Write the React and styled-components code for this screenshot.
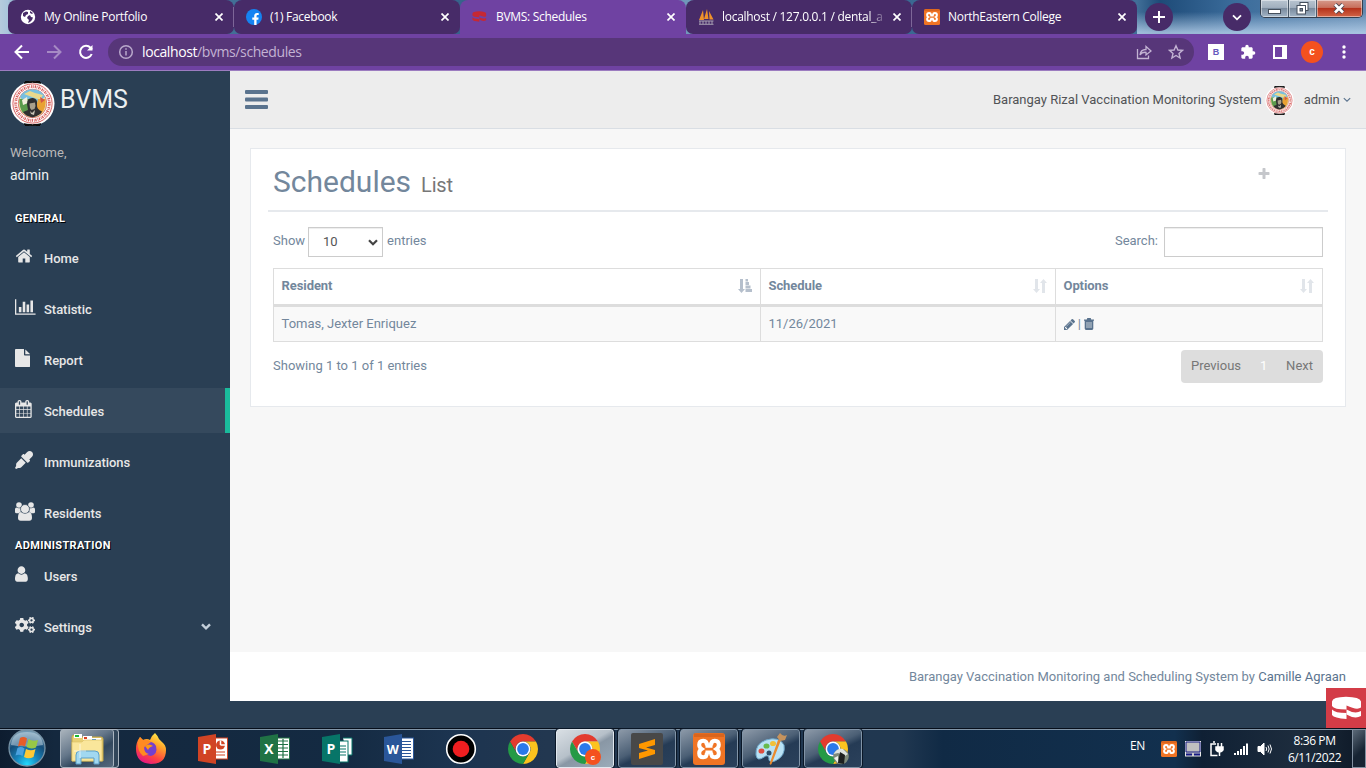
import React from "react";
import styled, { createGlobalStyle, css } from "styled-components";
import { FaEyeDropper, FaCogs, FaFacebookF } from "react-icons/fa";
import { MdExtension } from "react-icons/md";

const GlobalStyle = createGlobalStyle`
  * { box-sizing: border-box; }
  body {
    margin: 0;
    overflow: hidden;
    font-family: Roboto, "Liberation Sans", sans-serif;
    font-size: 13px;
    line-height: 1.471;
    color: #73879c;
  }
  svg { display: block; flex: none; }
`;

const uiFont = css`
  font-family: "Open Sans", "Noto Sans", sans-serif;
`;

const Screen = styled.div`
  width: 1366px;
  height: 768px;
  display: grid;
  grid-template-rows: 34px 37px 657px 40px;
  overflow: hidden;
`;

/* ---------- browser ---------- */

const TabStrip = styled.div`
  display: flex;
  padding-left: 8px;
  background:
    linear-gradient(180deg, transparent 35%, rgba(190, 215, 240, 0.75) 95%) 1137px 0 / 229px 34px no-repeat,
    linear-gradient(90deg, #b5cbdd 0, #a9c5dc 8px, #4b7ba0 30px, #356089 500px, #7199bb 690px, #3a6892 900px, #416f98 1137px, #1e4b78 1160px, #3b6c9b 1235px, #6289b0 1366px);
`;

const Tab = styled.div`
  ${uiFont}
  width: ${(p) => p.$width}px;
  height: 34px;
  display: flex;
  align-items: center;
  padding: 0 11px 0 12px;
  border-radius: 8px 8px ${(p) => (p.$active ? "0 0" : "7px 7px")};
  background: ${(p) => (p.$active ? "#6f42a2" : "#472b68")};
  color: #fff;
  font-size: 12px;
`;

const TabDivider = styled.span`
  width: 1px;
  height: 20px;
  margin: 0 -11px 0 10px;
  background: #7d6698;
`;

const Favicon = styled.span`
  width: 16px;
  height: 16px;
  flex: none;
  margin-right: 8px;
`;

const TabTitle = styled.span`
  flex: 1;
  overflow: hidden;
  white-space: nowrap;
  line-height: 18px;
  letter-spacing: ${(p) => p.$spacing || 0}px;
  ${(p) => p.$fade && "mask-image: linear-gradient(90deg, #000 88%, transparent 100%);"}
`;

const CloseIcon = styled.svg`
  margin-left: 5px;
`;

const CircleButton = styled.div`
  width: 28px;
  height: 28px;
  margin: 3px 0 0 ${(p) => p.$gap}px;
  border-radius: 50%;
  background: #472b68;
  display: grid;
  place-items: center;
`;

const WindowControls = styled.div`
  display: flex;
  height: 18px;
  margin-left: 9px;
  width: 103px;
  border: 1px solid #343f4e;
  border-top: 0;
  border-radius: 0 0 5px 5px;
  overflow: hidden;
`;

const WindowButton = styled.div`
  flex: ${(p) => (p.$danger ? 47 : 28)} 0 0;
  display: grid;
  place-items: center;
  border-right: ${(p) => (p.$danger ? 0 : 1)}px solid #485868;
  box-shadow: inset 0 0 0 1px rgba(255, 255, 255, 0.45);
  background: ${(p) =>
    p.$danger
      ? "linear-gradient(#d69a8b 0, #c8705c 44%, #b32f18 46%, #d26547 100%)"
      : "linear-gradient(#b8c4d0 0, #a2b0bf 44%, #76879a 46%, #a3b5c7 100%)"};
`;

const Toolbar = styled.div`
  display: flex;
  align-items: center;
  padding: 0 0 1px;
  background: #6f42a2;
  border-bottom: 1px solid #9c7cc0;
`;

const NavIcons = styled.div`
  display: flex;
  gap: 16px;
  padding-left: 14px;
  width: 108px;
`;

const AddressBar = styled.div`
  ${uiFont}
  width: 1086px;
  height: 28px;
  border-radius: 14px;
  background: #573679;
  display: flex;
  align-items: center;
  padding: 0 10px;
  color: #c3b3d3;
  font-size: 14px;
  letter-spacing: -0.4px;
`;

const AddressText = styled.div`
  flex: 1;
  margin-left: 8px;
  padding-top: 1px;
  b { font-weight: 400; color: #fff; }
`;

const AddressIcons = styled.div`
  display: flex;
  gap: 16px;
`;

const Extensions = styled.div`
  display: flex;
  align-items: center;
  padding-left: 14px;
`;

const ExtensionBadge = styled.div`
  width: 16px;
  height: 16px;
  background: #fff;
  color: #6659bd;
  font: 700 9px/16px "Liberation Sans", sans-serif;
  text-align: center;
  margin-right: 16px;
`;

const SidePanelIcon = styled.div`
  width: 14px;
  height: 14px;
  margin: 0 14px 0 17px;
  border: 2px solid #fff;
  border-right-width: 5px;
`;

const ProfileBadge = styled.div`
  width: 22px;
  height: 22px;
  border-radius: 50%;
  background: #f4511e;
  color: #fff;
  font: 700 10px/22px "Liberation Sans", sans-serif;
  text-align: center;
`;

const MenuDots = styled.svg`
  margin-left: 19px;
`;

/* ---------- page ---------- */

const Page = styled.div`
  position: relative;
  display: flex;
  background: #2a3f54;
`;

const Sidebar = styled.aside`
  width: 230px;
  color: #e7e7e7;
  font-weight: 500;
`;

const Brand = styled.div`
  display: flex;
  align-items: center;
  gap: 6px;
  height: 58px;
  padding: 6px 0 0 10px;
  font-size: 25px;
  font-weight: 400;
  color: #ecf0f1;
  span { margin: -6px 0 0 -1px; }
`;

const Welcome = styled.div`
  padding: 14px 10px 0;
  height: 76px;
  font-weight: 400;
  color: #bab8b8;
  strong {
    display: block;
    margin-top: 3px;
    font-size: 14px;
    line-height: 21px;
    font-weight: 400;
    color: #ecf0f1;
  }
`;

const SectionTitle = styled.h3`
  height: ${(p) => p.$height}px;
  margin: 0;
  padding: ${(p) => p.$top}px 0 0 15px;
  font-size: 11px;
  line-height: ${(p) => p.$line || 16}px;
  font-weight: 700;
  letter-spacing: 0.33px;
  color: #fff;
  text-shadow: 1px 1px #000;
  text-transform: uppercase;
`;

const NavItem = styled.a`
  display: flex;
  align-items: center;
  height: 45px;
  margin-bottom: 6px;
  padding: 0 ${(p) => (p.$active ? 14 : 19)}px 0 15px;
  background: ${(p) => (p.$active ? "#35495d" : "transparent")};
  border-right: ${(p) => (p.$active ? "5px solid #1abb9c" : "0")};
`;

const NavGlyph = styled.span`
  width: 29px;
  margin-top: -3px;
  color: #e7e7e7;
`;

const NavLabel = styled.span`
  flex: 1;
  line-height: 18px;
  padding-top: 3px;
  letter-spacing: -0.03px;
`;

const Main = styled.main`
  width: 1136px;
  height: 630px;
  display: grid;
  grid-template-rows: 58px 523px 49px;
`;

const TopBar = styled.header`
  display: flex;
  align-items: center;
  justify-content: space-between;
  padding: 0 15px 0 15px;
  background: #ededed;
  border-bottom: 1px solid #d9dee4;
`;

const Account = styled.div`
  display: flex;
  align-items: center;
  padding-top: 1px;
  color: #515356;
  svg:first-of-type { margin: 0 10px 0 3px; }
`;

const Content = styled.div`
  background: #f7f7f7;
  padding: 19px 20px;
`;

const Panel = styled.section`
  height: 259px;
  padding: 0 17px;
  background: #fff;
  border: 1px solid #e6e9ed;
`;

const PanelHeader = styled.div`
  display: flex;
  justify-content: space-between;
  height: 63px;
  padding: 13px 57px 0 5px;
  border-bottom: 2px solid #e6e9ed;
`;

const Title = styled.h1`
  margin: 0;
  font-size: 30px;
  line-height: 40px;
  font-weight: 400;
  small {
    margin-left: 10px;
    font-size: 20px;
    letter-spacing: -0.2px;
    color: #777;
  }
`;

const AddIcon = styled.svg`
  margin-top: 5px;
`;

const PanelBody = styled.div`
  padding: 15px 5px 0;
`;

const Controls = styled.div`
  display: flex;
  justify-content: space-between;
  height: 41px;
`;

const Control = styled.label`
  display: flex;
  line-height: 28px;
`;

const Select = styled.div`
  width: 75px;
  height: 30px;
  margin: 0 4px 0 3px;
  padding: 0 4px 0 14px;
  display: flex;
  align-items: center;
  justify-content: space-between;
  border: 1px solid #ccc;
  box-shadow: inset 0 1px 1px rgba(0, 0, 0, 0.075);
  color: #555;
`;

const SearchInput = styled.input`
  width: 159px;
  height: 30px;
  margin: 0 0 0 6px;
  border: 1px solid #ccc;
  box-shadow: inset 0 1px 1px rgba(0, 0, 0, 0.075);
`;

const Table = styled.div`
  display: grid;
  grid-template-columns: 487px 295px 267px;
  border: 1px solid #ddd;
  border-right: 0;
`;

const Cell = styled.div`
  display: flex;
  align-items: center;
  justify-content: ${(p) => (p.$head ? "space-between" : "flex-start")};
  height: ${(p) => (p.$head ? 38 : 34)}px;
  padding: 0 8px ${(p) => (p.$head ? 2 : 0)}px 7.500px;
  border-right: 1px solid #ddd;
  border-bottom: ${(p) => (p.$head ? "3px solid #ddd" : "0")};
  background: ${(p) => (p.$head ? "#fff" : "#f9f9f9")};
  font-weight: ${(p) => (p.$head ? 700 : 400)};
  letter-spacing: ${(p) => (p.$head ? -0.08 : 0)}px;
`;

const TableFooter = styled.div`
  display: flex;
  justify-content: space-between;
  padding-top: 8px;
  line-height: 32px;
`;

const Pagination = styled.div`
  display: flex;
  justify-content: space-between;
  width: 142px;
  height: 33px;
  padding: 0 10px;
  border-radius: 4px;
  background: #ddd;
  color: #777;
  span { color: #fff; }
`;

const Footer = styled.footer`
  background: #fff;
  padding: 15px 20px;
  text-align: right;
  a { color: #5a738e; }
`;

const CakeBadge = styled.div`
  position: absolute;
  right: 0;
  bottom: 0;
  width: 40px;
  height: 40px;
  background: #d33c47;
`;

/* ---------- taskbar ---------- */

const Taskbar = styled.div`
  display: flex;
  border-top: 1px solid #070f1b;
  box-shadow: inset 0 1px 0 #8396a8;
  background: linear-gradient(90deg, #0d1c2f 0, #14283e 4%, #142a42 25%, #1c3450 33%, #223750 40%, #203750 66%, #102a45 69%, #12304e 86%, #0f2034 88%, #1d2c3d 95%, #0d1826 100%);
  color: #fff;
`;

const StartButton = styled.div`
  width: 60px;
  padding-left: 8px;
`;

const TaskItem = styled.div`
  width: ${(p) => (p.$state ? 58 : 62)}px;
  height: 39px;
  margin-left: ${(p) => (p.$state === "active" ? 2 : 0)}px;
  margin-right: ${(p) => (p.$state ? 4 : 0)}px;
  display: grid;
  place-items: center;
  ${(p) =>
    p.$state &&
    css`
      border: 1px solid ${p.$state === "active" ? "#e1e8ef" : "#8194a7"};
      border-radius: 3px;
      outline: 1px solid #0a1727;
      outline-offset: 0;
      background: ${p.$state === "active"
        ? "linear-gradient(150deg, #d9dfe4 0%, #b6c0c9 45%, #8997a5 55%, #9babb9 100%)"
        : "linear-gradient(155deg, #8c99a8 0%, #4b5f75 45%, #253b55 58%, #2b415b 100%)"};
    `}
`;

const ExplorerItem = styled.div`
  width: 59px;
  height: 39px;
  margin-right: 1px;
  padding-left: 9px;
  display: flex;
  align-items: center;
  border: 1px solid #a8b3be;
  border-radius: 3px;
  box-shadow: inset -4px 0 0 #31465a, inset -5px 0 0 #aab5c0;
  background: linear-gradient(150deg, #a9b3bc 0%, #65778a 40%, #32485e 60%, #5a6d80 100%);
`;

const Tray = styled.div`
  ${uiFont}
  margin-left: auto;
  display: flex;
  font-size: 12px;
`;

const Language = styled.span`
  width: 31px;
  line-height: 33px;
  letter-spacing: -0.3px;
`;

const TrayIcons = styled.div`
  display: flex;
  gap: 8px;
  padding-top: 12px;
`;

const Clock = styled.div`
  width: 75px;
  padding-top: 3px;
  margin-left: 4px;
  text-align: center;
  line-height: 17px;
  letter-spacing: -0.4px;
`;

const ShowDesktop = styled.div`
  width: 14px;
  border: 1px solid #8290a0;
  background: linear-gradient(135deg, #5b6978, #172433 60%);
`;

/* ---------- drawings ---------- */

const Awesome = ({ d, size = 18, width = 1792, color = "currentColor" }) => (
  <svg height={size} width={(size * width) / 1792} viewBox={`0 0 ${width} 1792`} fill={color}>
    <path d={d} />
  </svg>
);

const paths = {
  home: "M1472 992v480q0 26-19 45t-45 19h-384v-384h-256v384h-384q-26 0-45-19t-19-45v-480q0-1 .5-3t.5-3l575-474 575 474q1 2 1 6zm223-69l-62 74q-8 9-21 11h-3q-13 0-21-7l-692-577-692 577q-12 8-24 7-13-2-21-11l-62-74q-8-10-7-23.5t11-21.5l719-599q32-26 76-26t76 26l244 204v-195q0-14 9-23t23-9h192q14 0 23 9t9 23v408l219 182q10 8 11 21.5t-7 23.5z",
  chart: "M640 896v512h-256v-512h256zm384-512v1024h-256v-1024h256zm1024 1152v128h-2048v-1536h128v1408h1920zm-640-896v768h-256v-768h256zm384-384v1152h-256v-1152h256z",
  file: "M1024 512v-472q22 14 36 28l408 408q14 14 28 36h-472zm-128 32q0 40 28 68t68 28h544v1056q0 40-28 68t-68 28h-1344q-40 0-68-28t-28-68v-1600q0-40 28-68t68-28h800v544z",
  calendar: "M128 1664h288v-288h-288v288zm352 0h320v-288h-320v288zm-352-352h288v-320h-288v320zm352 0h320v-320h-320v320zm-352-384h288v-288h-288v288zm736 736h320v-288h-320v288zm-384-736h320v-288h-320v288zm768 736h288v-288h-288v288zm-384-352h320v-320h-320v320zm-352-864v-288q0-13-9.5-22.5t-22.5-9.5h-64q-13 0-22.5 9.5t-9.5 22.5v288q0 13 9.5 22.5t22.5 9.5h64q13 0 22.5-9.5t9.5-22.5zm736 864h288v-320h-288v320zm-384-384h320v-288h-320v288zm384 0h288v-288h-288v288zm32-480v-288q0-13-9.5-22.5t-22.5-9.5h-64q-13 0-22.5 9.5t-9.5 22.5v288q0 13 9.5 22.5t22.5 9.5h64q13 0 22.5-9.5t9.5-22.5zm384-64v1280q0 52-38 90t-90 38h-1408q-52 0-90-38t-38-90v-1280q0-52 38-90t90-38h128v-96q0-66 47-113t113-47h64q66 0 113 47t47 113v96h384v-96q0-66 47-113t113-47h64q66 0 113 47t47 113v96h128q52 0 90 38t38 90z",
  user: "M1280 1399q0 109-62.5 187t-150.5 78h-854q-88 0-150.5-78t-62.5-187q0-85 8.5-160.5t31.5-152 58.5-131 94-89 134.5-34.5q131 128 313 128t313-128q76 0 134.5 34.5t94 89 58.5 131 31.5 152 8.5 160.5zm-256-887q0 159-112.5 271.5t-271.5 112.5-271.5-112.5-112.5-271.5 112.5-271.5 271.5-112.5 271.5 112.5 112.5 271.5z",
  plus: "M1600 736v192q0 40-28 68t-68 28h-416v416q0 40-28 68t-68 28h-192q-40 0-68-28t-28-68v-416h-416q-40 0-68-28t-28-68v-192q0-40 28-68t68-28h416v-416q0-40 28-68t68-28h192q40 0 68 28t28 68v416h416q40 0 68 28t28 68z",
  pencil: "M363 1536l91-91-235-235-91 91v107h128v128h107zm523-928q0-22-22-22-10 0-17 7l-542 542q-7 7-7 17 0 22 22 22 10 0 17-7l542-542q7-7 7-17zm-54-192l416 416-832 832h-416v-416zm683 96q0 53-37 90l-166 166-416-416 166-165q36-38 90-38 53 0 91 38l235 234q37 39 37 91z",
};

const GroupIcon = () => (
  <svg width="20" height="19" viewBox="0 0 20 19" fill="#e7e7e7">
    <circle cx="4" cy="3" r="2.8" />
    <circle cx="16" cy="3" r="2.8" />
    <path d="M0 10V7.600Q0 5.500 1.500 5.500Q3.500 7 6 5.700L7 9Q5 9.200 4 11.200H1.600Q0 11.200 0 10Z" />
    <path d="M20 10V7.600Q20 5.500 18.500 5.500Q16.500 7 14 5.700L13 9Q15 9.200 16 11.200H18.400Q20 11.200 20 10Z" />
    <circle cx="10" cy="7" r="4.500" stroke="#2a3f54" strokeWidth="0.700" />
    <path d="M5.800 10Q10 13.300 14.200 10Q17 10.500 17 15.700Q17 18.700 14.300 18.700H5.700Q3 18.700 3 15.700Q3 10.500 5.800 10Z" />
  </svg>
);

const ChevronDown = ({ width, stroke, weight = 2 }) => (
  <svg width={width} height={width * 0.7} viewBox="0 0 10 7" fill="none" stroke={stroke} strokeWidth={weight}>
    <path d="M1 1.300L5 5.300L9 1.300" />
  </svg>
);

const Seal = ({ size }) => (
  <svg width={size} height={size} viewBox="0 0 45 45">
    <path d="M15 0H30V4H15ZM15 41H30V45H15Z" fill="#0b0b0b" />
    <circle cx="22.500" cy="22.500" r="22" fill="#fff" />
    <path d="M14 2Q22.500 -1 31 2Q22.500 0.500 14 2ZM14 43Q22.500 46 31 43Q22.500 44.500 14 43Z" fill="#0b0b0b" stroke="#0b0b0b" />
    <circle cx="22.500" cy="22.500" r="19.600" fill="none" stroke="#d2504f" strokeWidth="0.900" />
    <circle cx="22.500" cy="22.500" r="16.900" fill="none" stroke="#d65c5a" strokeWidth="2.800" strokeDasharray="1.300 0.700 0.700 1" />
    <circle cx="22.500" cy="22.500" r="14.300" fill="#e9dfa5" stroke="#d2504f" strokeWidth="0.700" />
    <path d="M10 16A14 14 0 0 1 35 16L28 21H14Z" fill="#77bfe0" />
    <path d="M14 13L20 10L25 12L33 14L30 19L22 16Z" fill="#e9d98c" />
    <path d="M9.500 18H20V29L13 32Q9 27 9.500 18Z" fill="#5b9b4c" />
    <path d="M28 18H35.500Q36.500 27 31 33L26 28Z" fill="#e9a133" />
    <path d="M12 19L17 16L18 22L13 24Z" fill="#f2eedc" />
    <path d="M30 16L35 19L31 22Z" fill="#d45743" />
    <path d="M17 23Q17 16.500 23 17Q28 17.500 27 24Q26.500 28 32 30.500Q31 34 22.500 36.500Q15 35 13 31L18 29Z" fill="#303030" />
    <path d="M19.500 22.500L25 21.500L25.500 25L24.500 28L21.500 29L20 27Z" fill="#a9a08c" />
    <path d="M20 30L22 32L25 29L24 34L21 33Z" fill="#c9c5b7" />
  </svg>
);

const CakeMark = ({ color = "#fff", width = 40, height = 40, box = "0 0 40 40" }) => (
  <svg width={width} height={height} viewBox={box} fill={color}>
    <path d="M6 13.500Q6.500 9 20 8.700Q34 9 35 13.500V19.500Q31 22.500 20.500 17.500V21.500Q8 21.500 6 18Z" />
    <path d="M6 21.500Q9 25 20.500 25V31Q8 30 6 27Z" />
    <path d="M20.500 21.500Q29 26.500 35 23V28Q29 31.500 20.500 26.500Z" />
  </svg>
);

const XamppMark = ({ size }) => (
  <svg width={size} height={size} viewBox="0 0 32 32">
    <rect width="32" height="32" rx="3" fill="#f07424" />
    <path d="M1 0.500H31V4H1Z" fill="#c45516" opacity="0.500" />
    <g fill="none" stroke="#fff" strokeWidth="4">
      <path d="M14 12.500Q14 7.800 10.200 7.800Q6.200 7.800 6.200 11.800Q6.200 14.500 8.500 16Q6.200 17.500 6.200 20.200Q6.200 24.200 10.200 24.200Q14 24.200 14 19.500" />
      <path d="M18 12.500Q18 7.800 21.800 7.800Q25.800 7.800 25.800 11.800Q25.800 14.500 23.500 16Q25.800 17.500 25.800 20.200Q25.800 24.200 21.800 24.200Q18 24.200 18 19.500" />
      <path d="M12.500 13.200H19.500M12.500 19.200H19.500" strokeWidth="3.200" />
    </g>
  </svg>
);

const ChromeIcon = ({ badge }) => (
  <svg width="32" height="32" viewBox="-1 -1 32 32">
    <path d="M2.010 7.500A15 15 0 0 1 27.990 7.500H15A7.500 7.500 0 0 0 8.500 18.750Z" fill="#e33b2e" />
    <path d="M27.990 7.500A15 15 0 0 1 15 30L21.500 18.750A7.500 7.500 0 0 0 15 7.500Z" fill="#fcc31e" />
    <path d="M15 30A15 15 0 0 1 2.010 7.500L8.500 18.750A7.500 7.500 0 0 0 21.500 18.750Z" fill="#249a46" />
    <circle cx="15" cy="15" r="7.400" fill="#fff" />
    <circle cx="15" cy="15" r="5.900" fill="#2a79ea" />
    {badge === "letter" && (
      <g>
        <circle cx="23" cy="23" r="8" fill="#f4511e" />
        <text x="23" y="26" textAnchor="middle" fontFamily="Liberation Sans, sans-serif" fontSize="8" fontWeight="700" fill="#fff">c</text>
      </g>
    )}
    {badge === "photo" && (
      <g>
        <circle cx="23" cy="22.500" r="7.800" fill="#7e8a7b" />
        <path d="M15.500 20Q19 14 25 15L30 20L27 22L20 19Z" fill="#dde3df" />
        <path d="M22 18L27 21L26 30L20 29Z" fill="#1d2020" />
        <path d="M16 24L20 22V29Z" fill="#f0f1ec" />
      </g>
    )}
  </svg>
);

const FirefoxIcon = () => (
  <svg width="32" height="32" viewBox="0 0 32 32">
    <defs>
      <linearGradient id="flame" x1="0.800" y1="0" x2="0.300" y2="1">
        <stop offset="0" stopColor="#fff44f" />
        <stop offset="0.350" stopColor="#ffa42a" />
        <stop offset="0.700" stopColor="#ff453f" />
        <stop offset="1" stopColor="#e31587" />
      </linearGradient>
    </defs>
    <path d="M20 0Q23 3 24 6L27 9Q31 12 31 17Q31 31 16 31Q1 30 1 16Q1 9 5 4L8 7Q12 5 15 7Q16 3 20 0Z" fill="url(#flame)" />
    <path d="M12 9Q18 8 21 13Q23 21 16 23Q9 22 9 16Q9 13 12 9Z" fill="#7440cf" />
    <path d="M5 4L8 7Q13 6 16 9L12 12L9 14Q9 20 14 21L8 23Q2 18 3 9Z" fill="#ff8a22" />
    <path d="M10 13Q14 10 18 13Q14 14 13 17Z" fill="#ff980e" />
  </svg>
);

const OfficeIcon = ({ color, letter, kind }) => (
  <svg width="32" height="32" viewBox="0 0 32 32">
    {kind === "publisher" && <path d="M22 5H31V22H26" fill="#fff" stroke={color} strokeWidth="1" />}
    <rect x="15" y={kind === "publisher" ? 8 : 5} width={kind === "publisher" ? 12 : 15.500} height="21" fill="#fff" stroke={color} strokeWidth="1" />
    {kind === "slides" && (
      <g>
        <circle cx="23.500" cy="12" r="4.500" fill={color} />
        <path d="M23.500 12V7.500M23.500 12H28" stroke="#fff" strokeWidth="1.500" />
        <path d="M19 19H28M19 22H28" stroke={color} strokeWidth="1.200" />
      </g>
    )}
    {kind === "grid" && <path d="M19 8H29M19 11.500H29M19 15H29M19 18.500H29M19 22H29M24 6V25" stroke={color} strokeWidth="1.200" />}
    {kind === "lines" && <path d="M19 8.500H28M19 11.500H28M19 14.500H28M19 17.500H28M19 20.500H28M19 23.500H28" stroke={color} strokeWidth="1.100" />}
    {kind === "publisher" && <path d="M19 13H25M19 16H25M19 19H25M19 22H25" stroke={color} strokeWidth="1.200" />}
    <path d="M1 4L19 1V31L1 28Z" fill={color} />
    <text x="9.800" y="21" textAnchor="middle" fontFamily="Open Sans, sans-serif" fontSize={letter === "W" ? 12.5 : 14} fontWeight="700" fill="#fff">{letter}</text>
  </svg>
);

const FolderIcon = () => (
  <svg width="34" height="32" viewBox="0 0 34 32">
    <path d="M2 4Q2 2 4 2H9L11 4H31Q33 4 33 6V28H2Z" fill="#e8cf73" stroke="#c2a749" />
    <path d="M4 1H12V5H4ZM13 3H22V7H13ZM21 5H31V9H21Z" fill="#fff" />
    <path d="M5 2H9V4H5Z" fill="#19b834" /><path d="M14 4H17V6H14Z" fill="#db4424" /><path d="M22 6H26V8H22Z" fill="#2c8ae0" />
    <path d="M2 9H12L14 7H32V28H2Z" fill="#fae69b" stroke="#dcc269" strokeWidth="0.700" />
    <path d="M6 31V22Q6 18 10 18H25Q29 18 29 22V31H24V25H11V31Z" fill="#a1d8f1" stroke="#5b9fc8" />
    <path d="M10 11V25M4 18H16" stroke="#fff" strokeWidth="0.900" opacity="0.700" />
  </svg>
);

const WindowsOrb = () => (
  <svg width="38" height="38" viewBox="0 0 38 38">
    <defs>
      <radialGradient id="orb" cx="0.500" cy="0.950" r="0.900">
        <stop offset="0" stopColor="#23dafd" />
        <stop offset="0.350" stopColor="#1685bd" />
        <stop offset="0.700" stopColor="#164d78" />
        <stop offset="1" stopColor="#6f98b3" />
      </radialGradient>
    </defs>
    <circle cx="19" cy="19" r="18" fill="url(#orb)" stroke="#7793a6" strokeWidth="1.300" />
    <path d="M3 16Q4 3 19 3Q34 3 35 16Q19 19 3 16Z" fill="#e3eef5" opacity="0.450" />
    <path d="M12 9Q15.500 7 19 9.500L17 17.500Q13.500 15.500 10 17.500Z" fill="#e65d28" />
    <path d="M20.500 10Q25 13 30 11L28 18.500Q23 20.500 18.500 18Z" fill="#98c846" />
    <path d="M9.500 19Q13 17 16.500 19.500L14.500 27Q11 25 7.500 26.500Z" fill="#4ba1df" />
    <path d="M18 20Q23 22.500 27.500 20L25.500 28Q20.500 30.500 16 28Z" fill="#fdc936" />
  </svg>
);

const PaintIcon = () => (
  <svg width="34" height="34" viewBox="0 0 34 34">
    <path d="M2 23Q1 12 12 8Q25 4 30 13Q32 24 21 29Q14 31 15 26Q14 22 10 25Q3 30 2 23Z" fill="#b9e2f5" stroke="#6fa9cc" />
    <ellipse cx="7.500" cy="19" rx="3" ry="2.600" fill="#df4f40" />
    <ellipse cx="12.500" cy="14" rx="3" ry="2.600" fill="#67bb4d" />
    <ellipse cx="19" cy="11.500" rx="3" ry="2.600" fill="#f1c038" />
    <circle cx="15" cy="21" r="2.500" fill="#2e4e69" />
    <path d="M27 8L18 31Q17 34 15.500 32L24 8Z" fill="#e98b2e" />
    <path d="M23 5L26 9L31 8L33 3Q29 5 26 1Z" fill="#c6935d" />
  </svg>
);

const SublimeIcon = () => (
  <svg width="32" height="32" viewBox="0 0 32 32">
    <rect width="32" height="32" rx="2" fill="#484848" />
    <path d="M8 11L24 6V12L15 14.500L24 17V21L8 26V20L17 17.500L8 15Z" fill="#ff9800" />
  </svg>
);

const RecordIcon = () => (
  <svg width="32" height="32" viewBox="0 0 32 32">
    <circle cx="16" cy="16" r="14.300" fill="#000" stroke="#fff" strokeWidth="1.600" />
    <circle cx="16" cy="16" r="8.300" fill="#ef1e20" />
  </svg>
);

const SortIcon = ({ amount }) => (
  <svg width="14" height="14" viewBox="0 0 14 14" fill={amount ? "#b5bfcc" : "#e1e5ea"}>
    <path d="M2 0H5V10H7L3.500 14L0 10H2Z" />
    {amount ? (
      <path d="M7.500 0H10V2.500H7.500ZM7.500 3H11V6H7.500ZM7.500 6.500H12.500V9.500H7.500ZM7.500 10H14V13H7.500Z" />
    ) : (
      <path d="M9 14V4H7L10.500 0L14 4H12V14Z" />
    )}
  </svg>
);

const TrashIcon = () => (
  <svg width="10" height="12" viewBox="0 0 10 12" fill="#5a738e">
    <path d="M3.300 0H6.700L7.200 1.500H10V2.700H9.300V10.600Q9.300 12 8 12H2Q0.700 12 0.700 10.600V2.700H0V1.500H2.800Z" />
    <path d="M3 4V10M5 4V10M7 4V10" stroke="#f9f9f9" strokeWidth="0.700" />
  </svg>
);

const favicons = {
  globe: (
    <svg width="16" height="16" viewBox="0 0 16 16">
      <circle cx="8" cy="8" r="7.200" fill="#fff" />
      <path d="M3 4L6 2.500L8 3V5L6 6L5 8L3 7ZM8 7L10 6L11 8L13 8.500L12 11L10 13L8 14L9 11L7 9ZM10 2L13 4L12 5L10 4Z" fill="#472b68" />
    </svg>
  ),
  facebook: (
    <svg width="16" height="16" viewBox="0 0 16 16">
      <circle cx="8" cy="8" r="8" fill="#1583f2" />
      <FaFacebookF x="3.500" y="4" width="9.500" height="12" size={null} color="#fff" />
    </svg>
  ),
  cake: <CakeMark color="#c62833" width={16} height={16} box="5 4 34 34" />,
  sails: (
    <svg width="16" height="16" viewBox="0 0 16 16">
      <path d="M5 1L6 11L1 11ZM9 0L10.500 10H6ZM11 2L15.500 10.500H11.500Z" fill="#f0922b" />
      <path d="M1 12H15.500M1 15.300H15.500M2 12V15M5 12V15M8 12V15M11 12V15M14 12V15" stroke="#a79fb2" fill="none" />
    </svg>
  ),
  xampp: <XamppMark size={16} />,
};

const tabs = [
  { title: "My Online Portfolio", icon: "globe", width: 226, divider: true, spacing: -0.26 },
  { title: "(1) Facebook", icon: "facebook", width: 226, spacing: -0.26 },
  { title: "BVMS: Schedules", icon: "cake", width: 226, active: true, spacing: -0.3 },
  { title: "localhost / 127.0.0.1 / dental_a", icon: "sails", width: 226, divider: true, fade: true, spacing: -0.28 },
  { title: "NorthEastern College", icon: "xampp", width: 225, spacing: -0.3 },
];

const general = [
  { label: "Home", icon: <Awesome d={paths.home} /> },
  { label: "Statistic", icon: <Awesome d={paths.chart} width={2048} /> },
  { label: "Report", icon: <Awesome d={paths.file} width={1536} /> },
  { label: "Schedules", icon: <Awesome d={paths.calendar} width={1664} />, active: true },
  { label: "Immunizations", icon: <FaEyeDropper size={18} /> },
  { label: "Residents", icon: <GroupIcon /> },
];

const TabClose = () => (
  <CloseIcon width="8" height="8" viewBox="0 0 8 8" stroke="#fff" strokeWidth="1.700">
    <path d="M0.500 0.500L7.500 7.500M7.500 0.500L0.500 7.500" />
  </CloseIcon>
);

function Browser() {
  return (
    <>
      <TabStrip>
        {tabs.map((t) => (
          <Tab key={t.title} $width={t.width} $active={t.active}>
            <Favicon>{favicons[t.icon]}</Favicon>
            <TabTitle $fade={t.fade} $spacing={t.spacing}>{t.title}</TabTitle>
            <TabClose />
            {t.divider && <TabDivider />}
          </Tab>
        ))}
        <CircleButton $gap={8}>
          <svg width="12" height="12" viewBox="0 0 12 12" stroke="#fff" strokeWidth="2"><path d="M6 0V12M0 6H12" /></svg>
        </CircleButton>
        <CircleButton $gap={50}><ChevronDown width={10} stroke="#fff" weight={1.8} /></CircleButton>
        <WindowControls>
          <WindowButton>
            <svg width="13" height="14" viewBox="0 0 13 14"><rect x="0.500" y="7.500" width="12" height="4" fill="#fff" stroke="#454f5c" /></svg>
          </WindowButton>
          <WindowButton>
            <svg width="13" height="13" viewBox="0 0 13 13" fill="#fff" stroke="#454f5c">
              <rect x="4" y="0.500" width="8" height="8" />
              <rect x="1" y="3.500" width="8.500" height="8.500" />
              <rect x="4" y="6.500" width="2.500" height="2.500" fill="#7c8997" />
            </svg>
          </WindowButton>
          <WindowButton $danger>
            <svg width="12" height="11" viewBox="0 0 12 11"><path d="M2 1.500L10 9.500M10 1.500L2 9.500" stroke="#4b4550" strokeWidth="4.500" /><path d="M2 1.500L10 9.500M10 1.500L2 9.500" stroke="#fff" strokeWidth="2.600" /></svg>
          </WindowButton>
        </WindowControls>
      </TabStrip>
      <Toolbar>
        <NavIcons>
          <svg width="16" height="16" viewBox="0 0 16 16" fill="none" stroke="#fff" strokeWidth="2"><path d="M15 8H2M8 1.500L1.500 8L8 14.500" /></svg>
          <svg width="16" height="16" viewBox="0 0 16 16" fill="none" stroke="#a68ac4" strokeWidth="2"><path d="M1 8H14M8 1.500L14.500 8L8 14.500" /></svg>
          <svg width="16" height="16" viewBox="0 0 16 16" fill="none" stroke="#fff" strokeWidth="2"><path d="M13.700 10A6 6 0 1 1 12.500 3.800L14 5.500" /><path d="M14.500 1V6.500H9Z" fill="#fff" stroke="none" /></svg>
        </NavIcons>
        <AddressBar>
          <svg width="16" height="16" viewBox="0 0 16 16" fill="none" stroke="#b9a8cb" strokeWidth="1.500"><circle cx="8" cy="8" r="6.300" /><path d="M8 7V11.500M8 4.300V5.800" /></svg>
          <AddressText><b>localhost</b>/bvms/schedules</AddressText>
          <AddressIcons>
            <svg width="16" height="16" viewBox="0 0 16 16" fill="none" stroke="#c3b3d3" strokeWidth="1.300"><path d="M1.500 5V14.500H12.500V11.500" /><path d="M4 11Q4.500 5.500 10 5.500V2.500L15 7L10 11V8.300Q6 8 4 11Z" /></svg>
            <svg width="16" height="16" viewBox="0 0 16 16" fill="none" stroke="#c3b3d3" strokeWidth="1.400"><path d="M8 1.800L9.900 6L14.500 6.400L11 9.400L12.100 14L8 11.500L3.900 14L5 9.400L1.500 6.400L6.100 6Z" /></svg>
          </AddressIcons>
        </AddressBar>
        <Extensions>
          <ExtensionBadge>B</ExtensionBadge>
          <MdExtension size={16} color="#fff" />
          <SidePanelIcon />
          <ProfileBadge>c</ProfileBadge>
          <MenuDots width="4" height="14" viewBox="0 0 4 14" fill="#fff"><circle cx="2" cy="2" r="1.700" /><circle cx="2" cy="7" r="1.700" /><circle cx="2" cy="12" r="1.700" /></MenuDots>
        </Extensions>
      </Toolbar>
    </>
  );
}

function AppSidebar() {
  return (
    <Sidebar>
      <Brand><Seal size={45} /><span>BVMS</span></Brand>
      <Welcome>Welcome,<strong>admin</strong></Welcome>
      <SectionTitle $height={30} $top={6}>General</SectionTitle>
      {general.map((n) => (
        <NavItem key={n.label} $active={n.active}>
          <NavGlyph>{n.icon}</NavGlyph>
          <NavLabel>{n.label}</NavLabel>
        </NavItem>
      ))}
      <SectionTitle $height={12} $top={0} $line={10}>Administration</SectionTitle>
      <NavItem><NavGlyph><Awesome d={paths.user} width={1280} /></NavGlyph><NavLabel>Users</NavLabel></NavItem>
      <NavItem>
        <NavGlyph><FaCogs size={20} /></NavGlyph>
        <NavLabel>Settings</NavLabel>
        <ChevronDown width={10} stroke="#c4cfda" weight={2.4} />
      </NavItem>
    </Sidebar>
  );
}

function AppMain() {
  return (
    <Main>
      <TopBar>
        <svg width="23" height="19" viewBox="0 0 23 19" fill="#5a738e"><rect width="23" height="4" rx="1" /><rect y="7.500" width="23" height="4" rx="1" /><rect y="15" width="23" height="4" rx="1" /></svg>
        <Account>
          Barangay Rizal Vaccination Monitoring System
          <Seal size={29} />
          admin&nbsp;<ChevronDown width={8} stroke="#5a738e" weight={1.4} />
        </Account>
      </TopBar>
      <Content>
        <Panel>
          <PanelHeader>
            <Title>Schedules<small>List</small></Title>
            <AddIcon width="14" height="14" viewBox="0 0 1792 1792" fill="#c5c7cb"><path d={paths.plus} /></AddIcon>
          </PanelHeader>
          <PanelBody>
            <Controls>
              <Control>
                Show
                <Select>10<ChevronDown width={10} stroke="#444" weight={2.2} /></Select>
                entries
              </Control>
              <Control>Search:<SearchInput /></Control>
            </Controls>
            <Table>
              <Cell $head>Resident<SortIcon amount /></Cell>
              <Cell $head>Schedule<SortIcon /></Cell>
              <Cell $head>Options<SortIcon /></Cell>
              <Cell>Tomas, Jexter Enriquez</Cell>
              <Cell>11/26/2021</Cell>
              <Cell><Awesome d={paths.pencil} size={13} width={1536} color="#5a738e" />&nbsp;|&nbsp;<TrashIcon /></Cell>
            </Table>
            <TableFooter>
              Showing 1 to 1 of 1 entries
              <Pagination>Previous<span>1</span><div>Next</div></Pagination>
            </TableFooter>
          </PanelBody>
        </Panel>
      </Content>
      <Footer>Barangay Vaccination Monitoring and Scheduling System by <a>Camille Agraan</a></Footer>
    </Main>
  );
}

function WindowsTaskbar() {
  return (
    <Taskbar>
      <StartButton><WindowsOrb /></StartButton>
      <ExplorerItem><FolderIcon /></ExplorerItem>
      <TaskItem><FirefoxIcon /></TaskItem>
      <TaskItem><OfficeIcon color="#d14424" letter="P" kind="slides" /></TaskItem>
      <TaskItem><OfficeIcon color="#207245" letter="X" kind="grid" /></TaskItem>
      <TaskItem><OfficeIcon color="#077568" letter="P" kind="publisher" /></TaskItem>
      <TaskItem><OfficeIcon color="#2a5699" letter="W" kind="lines" /></TaskItem>
      <TaskItem><RecordIcon /></TaskItem>
      <TaskItem><ChromeIcon /></TaskItem>
      <TaskItem $state="active"><ChromeIcon badge="letter" /></TaskItem>
      <TaskItem $state="open"><SublimeIcon /></TaskItem>
      <TaskItem $state="open"><XamppMark size={32} /></TaskItem>
      <TaskItem $state="open"><PaintIcon /></TaskItem>
      <TaskItem $state="open"><ChromeIcon badge="photo" /></TaskItem>
      <Tray>
        <Language>EN</Language>
        <TrayIcons>
          <XamppMark size={16} />
          <svg width="16" height="16" viewBox="0 0 16 16"><rect x="0.500" y="0.500" width="15" height="14.500" fill="#c9c9c9" stroke="#e8e8e8" /><path d="M1 1H15V11H1Z" fill="#c0c0c0" stroke="#161a83" /><path d="M1 13.500H7M9 13.500H15" stroke="#161a83" strokeWidth="2" /></svg>
          <svg width="16" height="16" viewBox="0 0 16 16" fill="none" stroke="#fff" strokeWidth="1.500"><path d="M7 3H2V14.500H8.500" /><path d="M4 1H6" /><path d="M7 6H14V9Q13 11 10.500 11Q8 11 7 9Z" fill="#fff" /><path d="M9 2V6M12.500 2V6M10.500 11V15" /></svg>
          <svg width="16" height="16" viewBox="0 0 16 16" fill="#fff"><path d="M1 12H3V14H1ZM4 10H6V14H4ZM7 8H9V14H7ZM10 5H12V14H10ZM13 2.500H15V14H13Z" /></svg>
          <svg width="16" height="16" viewBox="0 0 16 16" fill="none" stroke="#fff"><path d="M1 5.500H3.500L7 2V14L3.500 10.500H1Z" fill="#fff" /><path d="M9 6Q10.500 8 9 10M11 4.500Q13.300 8 11 11.500M13 3.500Q16 8 13 12.500" /></svg>
        </TrayIcons>
        <Clock>8:36 PM<br />6/11/2022</Clock>
        <ShowDesktop />
      </Tray>
    </Taskbar>
  );
}

export default function App() {
  return (
    <Screen>
      <GlobalStyle />
      <Browser />
      <Page>
        <AppSidebar />
        <AppMain />
        <CakeBadge><CakeMark /></CakeBadge>
      </Page>
      <WindowsTaskbar />
    </Screen>
  );
}
